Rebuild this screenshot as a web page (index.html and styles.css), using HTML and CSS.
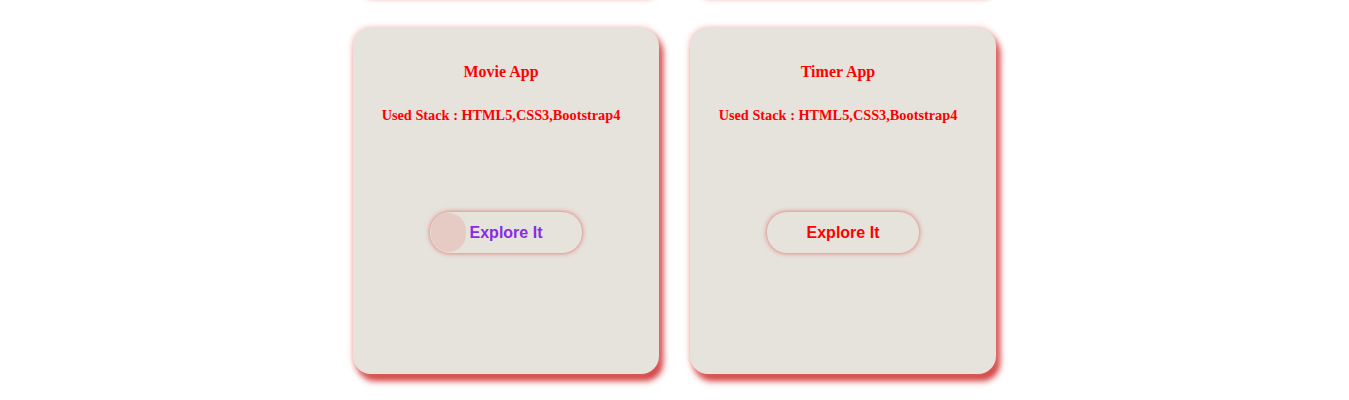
FILE: index.html
```html
<!DOCTYPE html>
<html lang="en">
<head>
  <meta charset="UTF-8" />
  <meta name="viewport" content="width=device-width, initial-scale=1.0"/>
  <title>Projects</title>
  <link rel="stylesheet" href="styles.css">
</head>
<body>
  <section class="projects">
    <div class="project-card">
      <div class="card-text">
        <h3>Todo App</h3>
        <p>Used Stack : HTML5,CSS3,JavaScript</p>
      </div>
      <button class="explore-btn">Explore It</button>
    </div>
    <div class="project-card">
      <div class="card-text">
        <h3>Weather App</h3>
        <p>Used Stack : HTML5,CSS3,JavaScript</p>
      </div>
      <button class="explore-btn">Explore It</button>
    </div>
    <div class="project-card">
      <div class="card-text">
        <h3>Movie App</h3>
        <p>Used Stack : HTML5,CSS3,Bootstrap4</p>
      </div>
      <button class="explore-btn hover">Explore It</button>
    </div>
    <div class="project-card">
      <div class="card-text">
        <h3>Timer App</h3>
        <p>Used Stack : HTML5,CSS3,Bootstrap4</p>
      </div>
      <button class="explore-btn">Explore It</button>
    </div>
  </section>
</body>
</html>
```

FILE: styles.css
```css
* {
  box-sizing: border-box;
}

html,
body {
  height: 400px;
  overflow: hidden;
}

body {
  margin: 0;
  background: #ffffff;
  font-family: "Liberation Serif", "Times New Roman", serif;
}

.projects {
  display: grid;
  grid-template-columns: repeat(2, 306px);
  justify-content: center;
  column-gap: 31px;
  row-gap: 38px;
  padding-top: 28px;
  transform: translateY(-384px);
}

.project-card {
  height: 346px;
  background: #e6e3dc;
  border-radius: 18px;
  box-shadow: 0 0 6px rgba(240, 140, 140, 0.75), 4px 7px 6px #d03c3c;
  display: flex;
  flex-direction: column;
  align-items: center;
  padding-top: 35px;
  color: #ff0000;
}

.card-text {
  display: flex;
  flex-direction: column;
  align-items: center;
  padding-right: 10px;
}

.project-card h3 {
  margin: 0;
  font-size: 16px;
  font-weight: bold;
}

.project-card p {
  margin: 26px 0 0;
  font-size: 14.3px;
  font-weight: bold;
}

.explore-btn {
  position: relative;
  overflow: hidden;
  margin-top: 88px;
  width: 152px;
  height: 41px;
  border: none;
  border-radius: 20px;
  background: #e6e3dc;
  box-shadow: 0 0 5px rgba(220, 80, 80, 0.85);
  font-family: "Liberation Sans", Arial, sans-serif;
  font-size: 16px;
  font-weight: bold;
  color: #ff0000;
  cursor: pointer;
}

.explore-btn::before {
  content: "";
  position: absolute;
  top: 1px;
  left: 1px;
  width: 35px;
  height: 39px;
  border-radius: 20px;
  background: #e5cbc3;
  display: none;
}

.explore-btn.hover,
.explore-btn:hover {
  color: #8a2be2;
}

.explore-btn.hover::before,
.explore-btn:hover::before {
  display: block;
}
```
